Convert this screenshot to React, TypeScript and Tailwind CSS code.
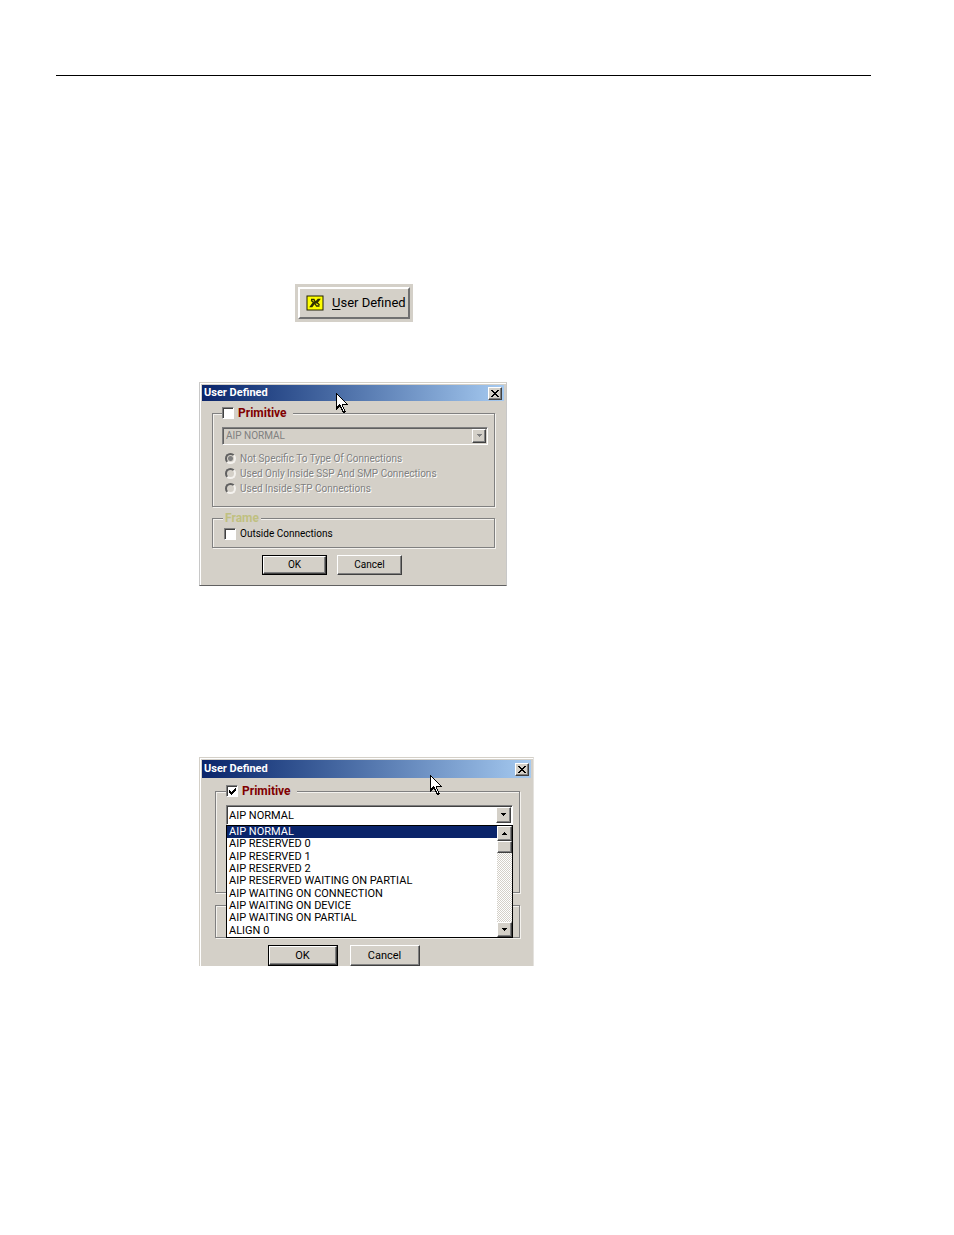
import { useState } from "react";
import type { ReactNode } from "react";

const primitives = [
  "AIP NORMAL",
  "AIP RESERVED 0",
  "AIP RESERVED 1",
  "AIP RESERVED 2",
  "AIP RESERVED WAITING ON PARTIAL",
  "AIP WAITING ON CONNECTION",
  "AIP WAITING ON DEVICE",
  "AIP WAITING ON PARTIAL",
  "ALIGN 0",
];

const connectionTypes = [
  "Not Specific To Type Of Connections",
  "Used Only Inside SSP And SMP Connections",
  "Used Inside STP Connections",
];

const raised =
  "bg-[#d4d0c8] border border-t-white border-l-white border-r-[#404040] border-b-[#404040] shadow-[inset_-1px_-1px_0_#808080]";
const sunken =
  "border border-t-[#808080] border-l-[#808080] border-r-white border-b-white";
const group =
  "relative min-w-0 border border-[#808080] shadow-[inset_1px_1px_0_#f4f2ee,1px_1px_0_#f4f2ee]";
const disabledText = "text-[#808080] [text-shadow:1px_1px_0_#fff]";

function Pointer({ className }: { className: string }) {
  return (
    <svg
      className={`absolute pointer-events-none ${className}`}
      width="12"
      height="20"
      viewBox="0 0 12 20"
      shapeRendering="crispEdges"
      aria-hidden="true"
    >
      <path
        d="M0 0h1v1h1v1h1v1h1v1h1v1h1v1h1v1h1v1h1v1h1v1h1v1h1v1H7v2h1v2h1v2h1v1H9v1H7v-1H6v-2H5v-2H4v-1H3v1H2v1H1v1H0z"
        fill="#000"
      />
      <path
        d="M1 2h1v1h1v1h1v1h1v1h1v1h1v1h1v1h1v1h1v1H6v3h1v2h1v2H7v-2H6v-2H5v-2H4v-1H3v1H2v1H1z"
        fill="#fff"
      />
    </svg>
  );
}

function Arrow({ up = false, muted = false }: { up?: boolean; muted?: boolean }) {
  return (
    <svg
      width="7"
      height="4"
      viewBox="0 0 7 4"
      shapeRendering="crispEdges"
      aria-hidden="true"
    >
      <path
        d={up ? "M3 0h1v1h1v1h1v1H1V2h1V1h1z" : "M1 0h5v1H5v1H4v1H3V2H2V1H1z"}
        fill={muted ? "#808080" : "#000"}
      />
    </svg>
  );
}

function TitleBar({ tall = false }: { tall?: boolean }) {
  return (
    <div
      className={`flex items-center justify-between px-[2px] bg-linear-to-r from-[#0a246a] to-[#a6caf0] ${
        tall ? "h-[18px]" : "h-[16px]"
      }`}
    >
      <h2 className="text-[11px] leading-[16px] font-bold text-white">
        User Defined
      </h2>
      <button
        type="button"
        aria-label="Close"
        className={`flex items-center justify-center w-[14px] h-[13px] ${raised}`}
      >
        <svg
          width="8"
          height="7"
          viewBox="0 0 8 7"
          shapeRendering="crispEdges"
          aria-hidden="true"
        >
          <path
            d="M0 0h2v1h1v1h2V1h1V0h2v1H7v1H6v1H5v1h1v1h1v1h1v1H6V6H5V5H3v1H2v1H0V6h1V5h1V4h1V3H2V2H1V1H0z"
            fill="#000"
          />
        </svg>
      </button>
    </div>
  );
}

function Tick({
  id,
  checked,
  onChange,
}: {
  id: string;
  checked: boolean;
  onChange: (checked: boolean) => void;
}) {
  return (
    <span className="relative flex">
      <input
        id={id}
        type="checkbox"
        checked={checked}
        onChange={(e) => onChange(e.target.checked)}
        className={`appearance-none w-[12px] h-[12px] bg-white shadow-[inset_1px_1px_0_#404040] ${sunken}`}
      />
      {checked && (
        <svg
          className="absolute left-[3px] top-[3px] pointer-events-none"
          width="7"
          height="7"
          viewBox="0 0 7 7"
          shapeRendering="crispEdges"
          aria-hidden="true"
        >
          <path
            d="M0 2h1v1h1v1h1V3h1V2h1V1h1V0h1v3H6v1H5v1H4v1H3v1H2V6H1V5H0z"
            fill="#000"
          />
        </svg>
      )}
    </span>
  );
}

function DialogButton({
  primary = false,
  wide = false,
  children,
}: {
  primary?: boolean;
  wide?: boolean;
  children: ReactNode;
}) {
  return (
    <button
      type="button"
      className={`flex items-center justify-center leading-[12px] ${
        wide ? "w-[70px] h-[21px] text-[11px]" : "w-[65px] h-[20px] text-[10px]"
      } ${raised} ${primary ? "outline outline-black -outline-offset-1 border-2" : ""}`}
    >
      {children}
    </button>
  );
}

function PrimitiveDialog() {
  const [primitive, setPrimitive] = useState(false);
  const [outside, setOutside] = useState(false);

  return (
    <section className="relative w-[308px] max-w-full h-[204px] bg-[#d4d0c8] border border-t-[#d4d0c8] border-l-[#c8c8c8] border-r-[#c8c8c8] border-b-[#606060] shadow-[inset_1px_1px_0_#fff] px-[2px] pt-[2px]">
      <TitleBar />
      <div className="pl-[10px] pr-[9px] pt-[6px]">
        <fieldset className={`${group} h-[100px] pl-[9px] pr-[6px]`}>
          <legend className="flex items-center gap-[4px] h-[12px] bg-[#d4d0c8] pr-[6px]">
            <Tick id="primitive-off" checked={primitive} onChange={setPrimitive} />
            <label
              htmlFor="primitive-off"
              className="text-[12px] leading-[12px] font-bold text-[#800000]"
            >
              Primitive
            </label>
          </legend>
          <div className="relative mt-[8px]">
            <select
              disabled
              aria-label="Primitive"
              className={`block appearance-none w-full h-[18px] pl-[3px] text-[10px] leading-[16px] opacity-100 text-[#808080] shadow-[inset_1px_1px_0_#606060] ${sunken}`}
            >
              <option>AIP NORMAL</option>
            </select>
            <span
              className={`absolute right-[2px] top-[2px] flex items-center justify-center w-[14px] h-[14px] pointer-events-none ${raised}`}
            >
              <Arrow muted />
            </span>
          </div>
          <div className="pt-[6px] pl-[3px]">
            {connectionTypes.map((type, i) => (
              <div key={type} className="flex items-center gap-[4px] h-[15px]">
                <input
                  id={`connection-${i}`}
                  type="radio"
                  name="connection"
                  disabled
                  defaultChecked={i === 0}
                  className="appearance-none w-[11px] h-[11px] rounded-full border-2 border-t-[#606060] border-l-[#606060] border-r-[#f4f2ee] border-b-[#f4f2ee] checked:bg-[radial-gradient(circle,#808080_2px,transparent_3px)]"
                />
                <label
                  htmlFor={`connection-${i}`}
                  className={`text-[10px] leading-[15px] whitespace-nowrap ${disabledText}`}
                >
                  {type}
                </label>
              </div>
            ))}
          </div>
        </fieldset>
        <fieldset className={`${group} mt-[5px] h-[36px] px-[10px]`}>
          <legend className="px-[2px] bg-[#d4d0c8] text-[12px] leading-[12px] font-bold text-[#c0c080]">
            Frame
          </legend>
          <div className="flex items-center gap-[4px] pt-[4px] pl-px">
            <Tick id="outside" checked={outside} onChange={setOutside} />
            <label htmlFor="outside" className="text-[10px] leading-[12px]">
              Outside Connections
            </label>
          </div>
        </fieldset>
      </div>
      <div className="flex justify-center gap-[10px] pt-[7px] pr-[42px]">
        <DialogButton primary>OK</DialogButton>
        <DialogButton>Cancel</DialogButton>
      </div>
      <Pointer className="left-[136px] top-[10px]" />
    </section>
  );
}

function PrimitiveListDialog() {
  const [primitive, setPrimitive] = useState(true);
  const [selected, setSelected] = useState(primitives[0]);

  return (
    <section className="relative w-[335px] max-w-full h-[209px] bg-[#d4d0c8] border border-b-0 border-t-[#d4d0c8] border-l-[#d4d0c8] border-r-[#e4e2de] shadow-[inset_1px_1px_0_#fff] px-[2px] pt-[2px]">
      <TitleBar tall />
      <div className="pl-[13px] pr-[11px] pt-[7px]">
        <fieldset className={`${group} h-[108px] pl-[10px] pr-[6px]`}>
          <legend className="flex items-center gap-[4px] h-[12px] bg-[#d4d0c8] pr-[6px]">
            <Tick id="primitive-on" checked={primitive} onChange={setPrimitive} />
            <label
              htmlFor="primitive-on"
              className="text-[12px] leading-[12px] font-bold text-[#800000]"
            >
              Primitive
            </label>
          </legend>
          <div className="relative mt-[8px]">
            <select
              aria-label="Primitive"
              value={selected}
              onChange={(e) => setSelected(e.target.value)}
              className={`block appearance-none w-full h-[20px] pl-[2px] pt-px text-[11px] leading-[16px] bg-white text-black shadow-[inset_1px_1px_0_#404040] ${sunken}`}
            >
              {primitives.map((name) => (
                <option key={name}>{name}</option>
              ))}
            </select>
            <span
              className={`absolute right-[2px] top-[2px] flex items-center justify-center w-[15px] h-[16px] pointer-events-none ${raised}`}
            >
              <Arrow />
            </span>

            {/* Open list, hangs over the frame group */}
            <div className="absolute z-10 left-0 right-0 top-full flex h-[113px] bg-white border border-black">
              <ul role="listbox" aria-label="Primitives" className="grid flex-1 auto-rows-fr">
                {primitives.map((name) => (
                  <li
                    key={name}
                    role="option"
                    aria-selected={name === selected}
                    onClick={() => setSelected(name)}
                    className={`flex items-center pl-[2px] text-[11px] leading-[12px] whitespace-nowrap ${
                      name === selected ? "bg-[#0a246a] text-white" : "text-black"
                    }`}
                  >
                    {name}
                  </li>
                ))}
              </ul>
              <div className="flex flex-col w-[15px] bg-[repeating-conic-gradient(#d4d0c8_0_25%,#fff_0_50%)] bg-[length:2px_2px]">
                <button
                  type="button"
                  aria-label="Scroll up"
                  className={`flex items-center justify-center h-[15px] ${raised}`}
                >
                  <Arrow up />
                </button>
                <div className={`h-[12px] ${raised}`} />
                <button
                  type="button"
                  aria-label="Scroll down"
                  className={`flex items-center justify-center h-[15px] mt-auto ${raised}`}
                >
                  <Arrow />
                </button>
              </div>
            </div>
          </div>
        </fieldset>
        <fieldset className={`${group} mt-[12px] h-[33px]`} aria-label="Frame" />
      </div>
      <div className="flex justify-center gap-[12px] pt-[7px] pr-[46px]">
        <DialogButton primary wide>
          OK
        </DialogButton>
        <DialogButton wide>Cancel</DialogButton>
      </div>
      <Pointer className="left-[230px] top-[17px]" />
    </section>
  );
}

export default function App() {
  return (
    <main className="min-h-screen bg-white pl-14 pr-[83px] pt-[75px] pb-[269px] font-['Roboto',sans-serif] text-black">
      <hr className="border-t border-black" />

      <div className="mt-[208px] ml-[239px] w-[118px] h-[38px] bg-[#d4d0c8] p-[3px]">
        <button
          type="button"
          className="flex items-center gap-[8px] w-full h-full pl-[6px] bg-[#d4d0c8] border-2 border-t-white border-l-white border-r-[#707070] border-b-[#707070] text-[13px] leading-[16px] whitespace-nowrap"
        >
          <svg
            className="shrink-0"
            width="18"
            height="16"
            viewBox="0 0 18 16"
            aria-hidden="true"
          >
            <rect x="1" y="1" width="16" height="14" fill="#ffff00" stroke="#202000" />
            <path
              d="M5 4.500h3L9.500 7.500 12 4.500h1.500L10.500 8.500M13.500 11H10.500L8.500 8 6 11.500H4.500L7.500 7.500M5 5.500L8 7.500h3l2.500 2.500"
              fill="none"
              stroke="#303000"
              strokeWidth="1.300"
            />
          </svg>
          <span>
            <u className="underline-offset-2">U</u>ser Defined
          </span>
        </button>
      </div>

      <div className="mt-[60px] ml-[143px]">
        <PrimitiveDialog />
      </div>

      <div className="mt-[171px] ml-[143px]">
        <PrimitiveListDialog />
      </div>
    </main>
  );
}
